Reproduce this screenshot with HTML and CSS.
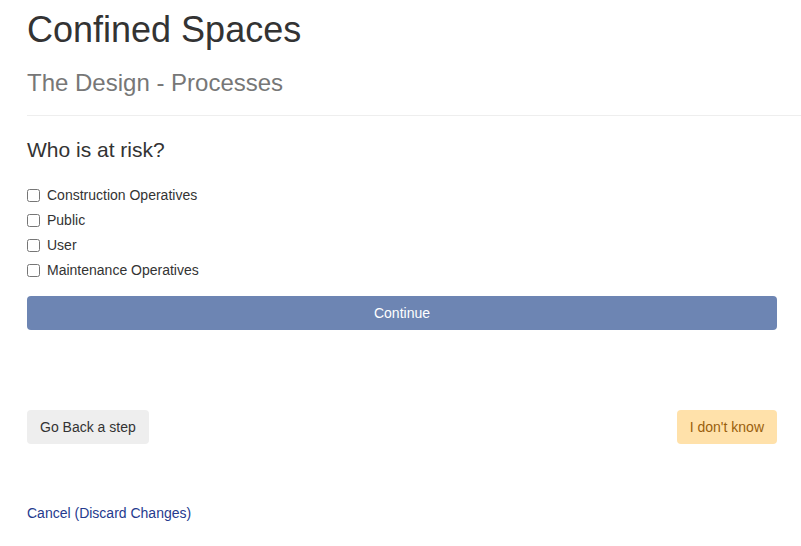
FILE: index.html
```html
<!DOCTYPE html>
<html lang="en">

<head>
    <meta charset="UTF-8">
    <meta name="viewport" content="width=device-width, initial-scale=1.0">
    <title>Confined Spaces</title>

    <link rel="stylesheet" href="styles.css">
</head>

<body>
    <div class="page">
        <h1 class="title">Confined Spaces</h1>
        <h2 class="subtitle">The Design - Processes</h2>
        <hr class="divider">

        <form class="question" action="#" method="GET">
            <h3 class="question-title">Who is at risk?</h3>

            <label class="option"><input type="checkbox" name="risk" value="construction"> Construction Operatives</label>
            <label class="option"><input type="checkbox" name="risk" value="public"> Public</label>
            <label class="option"><input type="checkbox" name="risk" value="user"> User</label>
            <label class="option"><input type="checkbox" name="risk" value="maintenance"> Maintenance Operatives</label>

            <button type="button" class="btn btn-continue">Continue</button>
        </form>

        <div class="nav-row">
            <button type="button" class="btn btn-back">Go Back a step</button>
            <button type="button" class="btn btn-unknown">I don't know</button>
        </div>

        <a class="cancel" href="#">Cancel (Discard Changes)</a>
    </div>
</body>

</html>
```

FILE: styles.css
```css
body {
    margin: 0;
    background-color: #fff;
    color: #333;
    font-family: "Liberation Sans", Arial, Helvetica, sans-serif;
    font-size: 14px;
}

.page {
    padding: 10px 24px 0 27px;
}

.title {
    font-size: 36px;
    font-weight: normal;
    line-height: 40px;
    margin: 0;
    color: #333;
}

.subtitle {
    font-size: 24px;
    font-weight: normal;
    line-height: 26px;
    margin: 20px 0 0 0;
    color: #777;
}

.divider {
    border: 0;
    border-top: 1px solid #eee;
    margin: 19px -24px 0 0;
}

.question-title {
    font-size: 21px;
    font-weight: normal;
    line-height: 22px;
    margin: 23px 0 21px 0;
    color: #333;
}

.option {
    display: flex;
    align-items: center;
    height: 25px;
    gap: 7px;
}

.option input {
    margin: 1px 0 0 0;
    width: 13px;
    height: 13px;
}

.btn {
    font-family: "Liberation Sans", Arial, Helvetica, sans-serif;
    font-size: 14px;
    border: none;
    border-radius: 4px;
    height: 34px;
    padding: 0 13px 1px 13px;
    cursor: pointer;
}

.btn-continue {
    display: block;
    width: 100%;
    margin-top: 14px;
    background-color: #6d85b3;
    color: #fff;
}

.nav-row {
    display: flex;
    justify-content: space-between;
    margin-top: 80px;
}

.btn-back {
    background-color: #eee;
    color: #333;
}

.btn-unknown {
    background-color: #ffe1aa;
    color: #9a5f0c;
}

.cancel {
    display: block;
    margin-top: 59px;
    line-height: 20px;
    color: #253a8e;
    text-decoration: none;
}
```
